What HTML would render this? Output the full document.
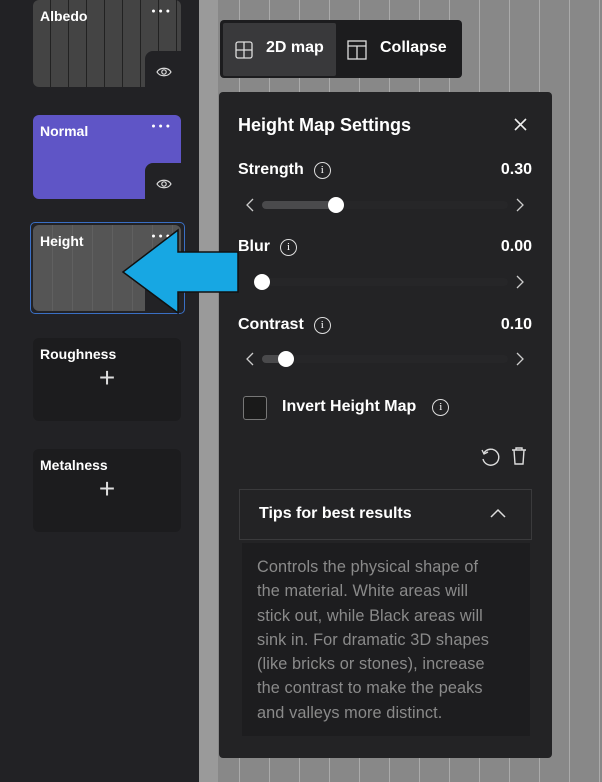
<!DOCTYPE html><html><head><style>
*{margin:0;padding:0;box-sizing:border-box}
body{width:602px;height:782px;overflow:hidden;position:relative;font-family:"Liberation Sans",sans-serif;background:#8a8a8a;
background-image:repeating-linear-gradient(90deg,#888 0 29px,#aaa 29px 30px);}
.side{position:absolute;left:0;top:0;width:199px;height:782px;background:#222225}
.card{position:absolute;left:33px;width:148px;border-radius:6px;color:#fff;font-weight:bold;font-size:14px}
.card .t{position:absolute;left:7px;top:8px}
.dots{position:absolute;right:8px;top:8px;font-size:7px;letter-spacing:3px}
.notch{position:absolute;right:0;bottom:0;width:36px;height:36px;background:#222225;border-top-left-radius:8px}
.eye{position:absolute;right:9px;bottom:9px}
.plus{position:absolute;left:0;right:0;top:24px;text-align:center;font-size:28px;font-weight:normal;color:#ddd}
.panel{position:absolute;left:219px;top:92px;width:333px;height:666px;background:#232325;border-radius:4px;color:#fff}
.lbl{position:absolute;font-weight:bold;font-size:16px}
.val{position:absolute;right:20px;font-weight:bold;font-size:16px}
.info{display:inline-block;width:17px;height:17px;border:1.3px solid #ddd;border-radius:50%;font-size:11px;text-align:center;line-height:15px;font-family:"Liberation Serif",serif;font-weight:normal;vertical-align:1px;margin-left:10px}
.track{position:absolute;left:43px;width:246px;height:8px;border-radius:4px;background:#262628}
.fill{position:absolute;left:0;top:0;height:8px;border-radius:4px;background:#4a4a4c}
.knob{position:absolute;top:-4px;width:16px;height:16px;border-radius:50%;background:#fff}
.arr{position:absolute}
</style></head><body>
<div class="side"></div>
<div style="position:absolute;left:199px;top:0;width:19px;height:782px;background:#9a9a9a"></div>
<div class="card" style="top:0;height:87px;background:#3a3a38;background-image:repeating-linear-gradient(90deg,#444 0 17px,#222 17px 18px)"><span class="t">Albedo</span><span class="dots">●●●</span><div class="notch"></div>
<svg class="eye" width="16" height="12" viewBox="0 0 16 12"><path d="M1 6C4 1 12 1 15 6C12 11 4 11 1 6Z" fill="none" stroke="#ddd" stroke-width="1.2"/><circle cx="8" cy="6" r="2.2" fill="none" stroke="#ddd" stroke-width="1.2"/></svg></div>
<div class="card" style="top:115px;height:84px;background:#5f55c6"><span class="t">Normal</span><span class="dots">●●●</span><div class="notch"></div>
<svg class="eye" width="16" height="12" viewBox="0 0 16 12"><path d="M1 6C4 1 12 1 15 6C12 11 4 11 1 6Z" fill="none" stroke="#ddd" stroke-width="1.2"/><circle cx="8" cy="6" r="2.2" fill="none" stroke="#ddd" stroke-width="1.2"/></svg></div>
<div style="position:absolute;left:30px;top:222px;width:155px;height:92px;border:1.5px solid #3a6fc4;border-radius:5px"></div>
<div class="card" style="top:225px;height:86px;background:#555;background-image:repeating-linear-gradient(90deg,#555 0 19px,#606060 19px 20px)"><span class="t">Height</span><span class="dots">●●●</span><div class="notch"></div></div>
<div class="card" style="top:338px;height:83px;background:#1c1c1e"><span class="t">Roughness</span><div class="plus">+</div></div>
<div class="card" style="top:449px;height:83px;background:#1c1c1e"><span class="t">Metalness</span><div class="plus">+</div></div>
<div style="position:absolute;left:220px;top:20px;width:242px;height:58px;background:#1c1c1e;border-radius:4px"></div>
<div style="position:absolute;left:223px;top:23px;width:113px;height:53px;background:#39393b;border-radius:2px"></div>
<svg style="position:absolute;left:235px;top:41px" width="18" height="18" viewBox="0 0 18 18"><rect x="1" y="1" width="16" height="16" rx="2" fill="none" stroke="#ddd" stroke-width="1.3"/><path d="M9 1V17M1 9H17" stroke="#ddd" stroke-width="1.3"/></svg>
<div style="position:absolute;left:266px;top:39px;color:#fff;font-weight:bold;font-size:16px">2D map</div>
<svg style="position:absolute;left:347px;top:40px" width="20" height="20" viewBox="0 0 20 20"><rect x="1" y="1" width="18" height="18" fill="none" stroke="#ddd" stroke-width="1.3"/><path d="M1 6H19M10 6V19" stroke="#ddd" stroke-width="1.3"/></svg>
<div style="position:absolute;left:380px;top:39px;color:#fff;font-weight:bold;font-size:16px">Collapse</div>
<div class="panel">
<div class="lbl" style="left:19px;top:23px;font-size:18px">Height Map Settings</div>
<svg style="position:absolute;right:25px;top:26px" width="13" height="13" viewBox="0 0 13 13"><path d="M1 1L12 12M12 1L1 12" stroke="#eee" stroke-width="1.6"/></svg>
<div class="lbl" style="left:19px;top:69px">Strength<span class="info">i</span></div><div class="val" style="top:69px">0.30</div>
<svg class="arr" style="left:27px;top:106px" width="8" height="14" viewBox="0 0 8 14"><path d="M7 1L1 7L7 13" fill="none" stroke="#ccc" stroke-width="1.3"/></svg>
<svg class="arr" style="left:297px;top:106px" width="8" height="14" viewBox="0 0 8 14"><path d="M1 1L7 7L1 13" fill="none" stroke="#ccc" stroke-width="1.3"/></svg>
<div class="track" style="top:109px"><div class="fill" style="width:75px"></div><div class="knob" style="left:66px"></div></div>
<div class="lbl" style="left:19px;top:146px">Blur<span class="info">i</span></div><div class="val" style="top:146px">0.00</div>
<svg class="arr" style="left:297px;top:183px" width="8" height="14" viewBox="0 0 8 14"><path d="M1 1L7 7L1 13" fill="none" stroke="#ccc" stroke-width="1.3"/></svg>
<div class="track" style="top:186px"><div class="knob" style="left:-8px"></div></div>
<div class="lbl" style="left:19px;top:224px">Contrast<span class="info">i</span></div><div class="val" style="top:224px">0.10</div>
<svg class="arr" style="left:27px;top:260px" width="8" height="14" viewBox="0 0 8 14"><path d="M7 1L1 7L7 13" fill="none" stroke="#ccc" stroke-width="1.3"/></svg>
<svg class="arr" style="left:297px;top:260px" width="8" height="14" viewBox="0 0 8 14"><path d="M1 1L7 7L1 13" fill="none" stroke="#ccc" stroke-width="1.3"/></svg>
<div class="track" style="top:263px"><div class="fill" style="width:28px"></div><div class="knob" style="left:16px"></div></div>
<div style="position:absolute;left:24px;top:304px;width:24px;height:24px;border:1.3px solid #777;border-radius:3px;background:#1a1a1a"></div>
<div class="lbl" style="left:63px;top:306px">Invert Height Map<span class="info" style="margin-left:16px">i</span></div>
<svg style="position:absolute;left:261px;top:355px" width="22" height="20" viewBox="0 0 22 20"><path d="M4 6A8 8 0 1 1 3 12" fill="none" stroke="#ddd" stroke-width="1.4"/><path d="M2 3L4 7L8 5" fill="none" stroke="#ddd" stroke-width="1.3"/></svg>
<svg style="position:absolute;left:292px;top:354px" width="16" height="20" viewBox="0 0 16 20"><path d="M1 4H15M5 4V2H11V4M3 4L4 18H12L13 4" fill="none" stroke="#ddd" stroke-width="1.4"/></svg>
<div style="position:absolute;left:20px;top:397px;width:293px;height:51px;border:1.5px solid #3a3a3c;background:#232325"></div>
<div class="lbl" style="left:40px;top:413px">Tips for best results</div>
<svg style="position:absolute;left:271px;top:416px" width="16" height="10" viewBox="0 0 16 10"><path d="M1 9L8 2L15 9" fill="none" stroke="#ddd" stroke-width="1.5"/></svg>
<div style="position:absolute;left:23px;top:451px;width:288px;height:193px;background:#1d1d1f;color:#8a8a8a;font-size:16.3px;line-height:24.3px;padding:12px 0 0 15px;white-space:nowrap;letter-spacing:0.1px">Controls the physical shape of<br>the material. White areas will<br>stick out, while Black areas will<br>sink in. For dramatic 3D shapes<br>(like bricks or stones), increase<br>the contrast to make the peaks<br>and valleys more distinct.</div>
</div>
<svg style="position:absolute;left:0;top:0" width="602" height="782"><path d="M123 272L178 230L178 252L238 252L238 292L178 292L178 313Z" fill="#17a7e3" stroke="#111" stroke-width="1.5"/></svg>
</body></html>
